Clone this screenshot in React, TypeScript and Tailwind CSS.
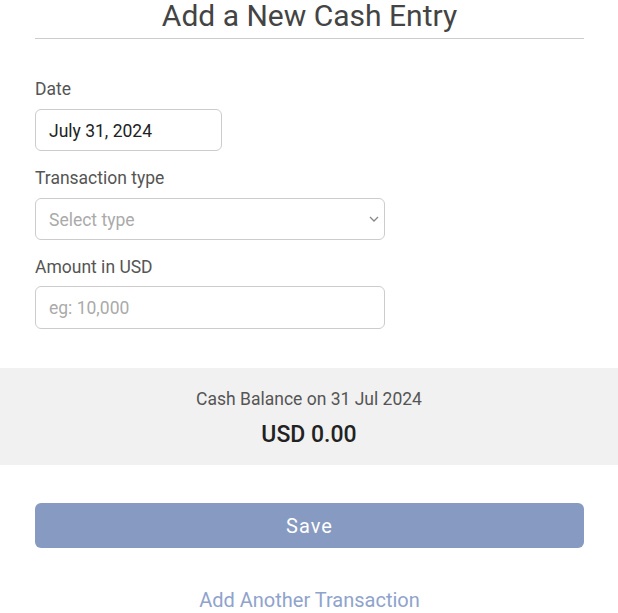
import React from "react";

function Label({ children }: { children: React.ReactNode }) {
  return (
    <div className="text-[17.5px] leading-[26px] text-[#555555] mb-[7px]">{children}</div>
  );
}

export default function App() {
  return (
    <div className="w-[618px] h-[613px] overflow-hidden bg-white font-['Roboto',sans-serif]">
      <div className="pl-[35px] pr-[34px]">
        <h1 className="text-[30px] leading-[32px] text-center text-[#444444] font-normal pb-[6px] border-b border-[#cccccc]">
          Add a New Cash Entry
        </h1>
        <div className="pt-[37px] flex flex-col gap-[14px]">
          <div>
            <Label>Date</Label>
            <div className="w-[187px] h-[42px] border border-[#cccccc] rounded-[6px] flex items-center pl-[13px] pt-[2px] text-[17.5px] text-[#222222]">
              July 31, 2024
            </div>
          </div>
          <div>
            <Label>Transaction type</Label>
            <div className="w-[350px] h-[42px] border border-[#cccccc] rounded-[6px] flex items-center justify-between pl-[13px] pr-[4px] text-[17.5px] text-[#aaaaaa]">
              <span className="pt-[2px]">Select type</span>
              <svg width="10" height="6" viewBox="0 0 10 6" className="mr-[1px]">
                <path d="M1 1 L5 5 L9 1" fill="none" stroke="#888888" strokeWidth="1.3" />
              </svg>
            </div>
          </div>
          <div>
            <Label>Amount in USD</Label>
            <div className="w-[350px] h-[43px] -mt-[1px] border border-[#cccccc] rounded-[6px] flex items-center pl-[13px] pt-[2px] text-[17.5px] text-[#aaaaaa]">
              eg: 10,000
            </div>
          </div>
        </div>
      </div>
      <div className="mt-[39px] bg-[#f1f1f1] pt-[18px] pb-[15px] flex flex-col items-center">
        <div className="text-[17.5px] leading-[26px] text-[#555555]">Cash Balance on 31 Jul 2024</div>
        <div className="mt-[8px] text-[23px] leading-[30px] font-medium text-[#222222]">USD 0.00</div>
      </div>
      <div className="pl-[35px] pr-[34px] pt-[38px]">
        <div className="h-[45px] rounded-[6px] bg-[#879ac1] flex items-center justify-center text-white text-[20px] font-normal tracking-[1px]">
          Save
        </div>
        <div className="mt-[38px] text-center text-[20px] leading-[28px] text-[#8fa3cc]">
          Add Another Transaction
        </div>
      </div>
    </div>
  );
}
